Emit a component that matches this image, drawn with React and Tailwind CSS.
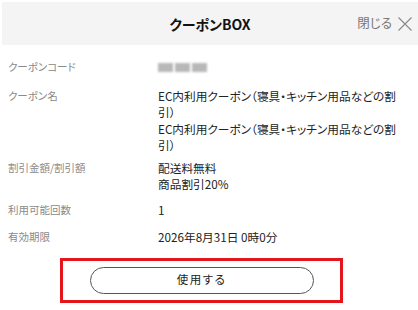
export default function App() {
  const font = { fontFamily: '"Noto Sans CJK JP", "Noto Sans", sans-serif', fontFeatureSettings: '"palt"' }

  return (
    <div className="w-[418px] h-[310px] bg-white overflow-hidden pt-[2px] pl-[2px]" style={font}>
      {/* HEADER */}
      <header className="relative h-[43px] bg-[#f4f4f4] flex items-center justify-center">
        <h1 className="text-[14px] font-bold text-[#111] leading-none">クーポンBOX</h1>
        <div className="absolute right-[5px] top-0 h-full flex items-center gap-[5px] text-[#777]">
          <span className="text-[12.5px] leading-none">閉じる</span>
          <svg width="16" height="16" viewBox="0 0 16 16" fill="none" stroke="#888" strokeWidth="1.1">
            <path d="M1.5 1.5 L14.5 14.5 M14.5 1.5 L1.5 14.5" />
          </svg>
        </div>
      </header>

      {/* DETAILS */}
      <dl className="pt-[14px] pl-[6px] text-[11.7px] leading-[16.5px]">
        <div className="flex mb-[12px]">
          <dt className="w-[150px] text-[10.5px] text-[#8a8a8a]">クーポンコード</dt>
          <dd className="flex items-center gap-[2px] h-[16.5px]">
            <span className="w-[15px] h-[9px] bg-[#b8b8b8] blur-[1px]" />
            <span className="w-[15px] h-[9px] bg-[#b8b8b8] blur-[1px]" />
            <span className="w-[15px] h-[9px] bg-[#b8b8b8] blur-[1px]" />
          </dd>
        </div>
        <div className="flex mb-[6px]">
          <dt className="w-[150px] text-[10.5px] text-[#8a8a8a]">クーポン名</dt>
          <dd className="text-[#222] whitespace-nowrap">
            <p>EC内利用クーポン（寝具・キッチン用品などの割<br />引）</p>
            <p>EC内利用クーポン（寝具・キッチン用品などの割<br />引）</p>
          </dd>
        </div>
        <div className="flex mb-[9px]">
          <dt className="w-[150px] text-[10.5px] text-[#8a8a8a]">割引金額/割引額</dt>
          <dd className="text-[#222]">
            <p>配送料無料</p>
            <p>商品割引20%</p>
          </dd>
        </div>
        <div className="flex mb-[11px]">
          <dt className="w-[150px] text-[10.5px] text-[#8a8a8a]">利用可能回数</dt>
          <dd className="text-[#222]">1</dd>
        </div>
        <div className="flex">
          <dt className="w-[150px] text-[10.5px] text-[#8a8a8a]">有効期限</dt>
          <dd className="text-[#222]">2026年8月31日 0時0分</dd>
        </div>
      </dl>

      {/* BUTTON */}
      <div className="mt-[12px] ml-[58px] w-[283px] h-[45px] border-[3px] border-[#e4161b] flex items-center justify-center">
        <button className="w-[224px] h-[27px] rounded-full border border-[#555] bg-white text-[11.5px] text-[#222] tracking-[1.5px]">
          使用する
        </button>
      </div>
    </div>
  )
}
